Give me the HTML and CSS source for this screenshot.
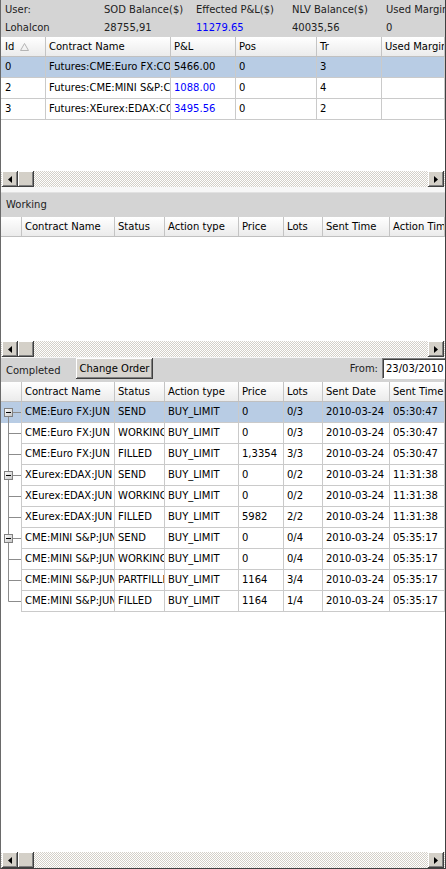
FILE: index.html
```html
<!DOCTYPE html>
<html>
<head>
<meta charset="utf-8">
<link rel="stylesheet" href="styles.css">
</head>
<body>
<div class="app">
  <div class="info">
    <span>User:</span><span>SOD Balance($)</span><span>Effected P&amp;L($)</span><span>NLV Balance($)</span><span>Used Margin</span>
    <span>Lohalcon</span><span>28755,91</span><span class="blue">11279.65</span><span>40035,56</span><span>0</span>
  </div>

  <div class="pane pane-pos">
    <div class="hdr g1">
      <div class="c">Id <svg class="sort" width="9" height="8" viewBox="0 0 9 8"><path d="M4.5 0.5 L8.5 7.5 L0.5 7.5 Z" fill="none" stroke="#b4b4b4"/></svg></div>
      <div class="c">Contract Name</div><div class="c">P&amp;L</div><div class="c">Pos</div><div class="c">Tr</div><div class="c">Used Margin</div>
    </div>
    <div class="row g1 sel">
      <div class="c">0</div><div class="c">Futures:CME:Euro FX:CONT</div><div class="c">5466.00</div><div class="c">0</div><div class="c">3</div><div class="c"></div>
    </div>
    <div class="row g1">
      <div class="c">2</div><div class="c">Futures:CME:MINI S&amp;P:CONT</div><div class="c blue">1088.00</div><div class="c">0</div><div class="c">4</div><div class="c"></div>
    </div>
    <div class="row g1">
      <div class="c">3</div><div class="c">Futures:XEurex:EDAX:CONT</div><div class="c blue">3495.56</div><div class="c">0</div><div class="c">2</div><div class="c"></div>
    </div>
    <div class="fill"></div>
    <div class="hs">
      <div class="sb"><svg width="4" height="7" viewBox="0 0 4 7"><path d="M4 0 L0 3.5 L4 7 Z" fill="#000"/></svg></div>
      <div class="sb thumb"></div>
      <div class="track"></div>
      <div class="sb"><svg width="4" height="7" viewBox="0 0 4 7"><path d="M0 0 L4 3.5 L0 7 Z" fill="#000"/></svg></div>
    </div>
  </div>

  <div class="split1"></div>
  <div class="bar">Working</div>

  <div class="pane pane-work">
    <div class="hdr g2">
      <div class="c"></div><div class="c">Contract Name</div><div class="c">Status</div><div class="c">Action type</div><div class="c">Price</div><div class="c">Lots</div><div class="c">Sent Time</div><div class="c">Action Time</div>
    </div>
    <div class="fill"></div>
    <div class="hs">
      <div class="sb"><svg width="4" height="7" viewBox="0 0 4 7"><path d="M4 0 L0 3.5 L4 7 Z" fill="#000"/></svg></div>
      <div class="sb thumb"></div>
      <div class="track"></div>
      <div class="sb"><svg width="4" height="7" viewBox="0 0 4 7"><path d="M0 0 L4 3.5 L0 7 Z" fill="#000"/></svg></div>
    </div>
  </div>

  <div class="split2"></div>
  <div class="toolbar">
    <span class="tb-label">Completed</span>
    <button class="btn">Change Order</button>
    <span class="from">From:</span>
    <div class="date">23/03/2010</div>
  </div>

  <div class="pane pane-done">
    <div class="hdr g2">
      <div class="c"></div><div class="c">Contract Name</div><div class="c">Status</div><div class="c">Action type</div><div class="c">Price</div><div class="c">Lots</div><div class="c">Sent Date</div><div class="c">Sent Time</div>
    </div>

    <div class="row g2 sel">
      <div class="c tree"><svg width="21" height="21" viewBox="0 0 21 21"><path d="M7.5 10.5 V21 M7.5 10.5 H21" stroke="#8c8c8c" fill="none"/><rect x="3.5" y="6.5" width="8" height="8" fill="url(#bx)" stroke="#808080"/><path d="M5 10.5 H10" stroke="#000"/></svg></div>
      <div class="c">CME:Euro FX:JUN</div><div class="c">SEND</div><div class="c">BUY_LIMIT</div><div class="c">0</div><div class="c">0/3</div><div class="c">2010-03-24</div><div class="c">05:30:47</div>
    </div>
    <div class="row g2">
      <div class="c tree"><svg width="21" height="21" viewBox="0 0 21 21"><path d="M7.5 0 V21 M7.5 10.5 H21" stroke="#8c8c8c" fill="none"/></svg></div>
      <div class="c">CME:Euro FX:JUN</div><div class="c">WORKING</div><div class="c">BUY_LIMIT</div><div class="c">0</div><div class="c">0/3</div><div class="c">2010-03-24</div><div class="c">05:30:47</div>
    </div>
    <div class="row g2">
      <div class="c tree"><svg width="21" height="21" viewBox="0 0 21 21"><path d="M7.5 0 V21 M7.5 10.5 H21" stroke="#8c8c8c" fill="none"/></svg></div>
      <div class="c">CME:Euro FX:JUN</div><div class="c">FILLED</div><div class="c">BUY_LIMIT</div><div class="c">1,3354</div><div class="c">3/3</div><div class="c">2010-03-24</div><div class="c">05:30:47</div>
    </div>
    <div class="row g2">
      <div class="c tree"><svg width="21" height="21" viewBox="0 0 21 21"><path d="M7.5 0 V21 M7.5 10.5 H21" stroke="#8c8c8c" fill="none"/><rect x="3.5" y="6.5" width="8" height="8" fill="url(#bx)" stroke="#808080"/><path d="M5 10.5 H10" stroke="#000"/></svg></div>
      <div class="c">XEurex:EDAX:JUN</div><div class="c">SEND</div><div class="c">BUY_LIMIT</div><div class="c">0</div><div class="c">0/2</div><div class="c">2010-03-24</div><div class="c">11:31:38</div>
    </div>
    <div class="row g2">
      <div class="c tree"><svg width="21" height="21" viewBox="0 0 21 21"><path d="M7.5 0 V21 M7.5 10.5 H21" stroke="#8c8c8c" fill="none"/></svg></div>
      <div class="c">XEurex:EDAX:JUN</div><div class="c">WORKING</div><div class="c">BUY_LIMIT</div><div class="c">0</div><div class="c">0/2</div><div class="c">2010-03-24</div><div class="c">11:31:38</div>
    </div>
    <div class="row g2">
      <div class="c tree"><svg width="21" height="21" viewBox="0 0 21 21"><path d="M7.5 0 V21 M7.5 10.5 H21" stroke="#8c8c8c" fill="none"/></svg></div>
      <div class="c">XEurex:EDAX:JUN</div><div class="c">FILLED</div><div class="c">BUY_LIMIT</div><div class="c">5982</div><div class="c">2/2</div><div class="c">2010-03-24</div><div class="c">11:31:38</div>
    </div>
    <div class="row g2">
      <div class="c tree"><svg width="21" height="21" viewBox="0 0 21 21"><path d="M7.5 0 V21 M7.5 10.5 H21" stroke="#8c8c8c" fill="none"/><rect x="3.5" y="6.5" width="8" height="8" fill="url(#bx)" stroke="#808080"/><path d="M5 10.5 H10" stroke="#000"/></svg></div>
      <div class="c">CME:MINI S&amp;P:JUN</div><div class="c">SEND</div><div class="c">BUY_LIMIT</div><div class="c">0</div><div class="c">0/4</div><div class="c">2010-03-24</div><div class="c">05:35:17</div>
    </div>
    <div class="row g2">
      <div class="c tree"><svg width="21" height="21" viewBox="0 0 21 21"><path d="M7.5 0 V21 M7.5 10.5 H21" stroke="#8c8c8c" fill="none"/></svg></div>
      <div class="c">CME:MINI S&amp;P:JUN</div><div class="c">WORKING</div><div class="c">BUY_LIMIT</div><div class="c">0</div><div class="c">0/4</div><div class="c">2010-03-24</div><div class="c">05:35:17</div>
    </div>
    <div class="row g2">
      <div class="c tree"><svg width="21" height="21" viewBox="0 0 21 21"><path d="M7.5 0 V21 M7.5 10.5 H21" stroke="#8c8c8c" fill="none"/></svg></div>
      <div class="c">CME:MINI S&amp;P:JUN</div><div class="c">PARTFILLED</div><div class="c">BUY_LIMIT</div><div class="c">1164</div><div class="c">3/4</div><div class="c">2010-03-24</div><div class="c">05:35:17</div>
    </div>
    <div class="row g2">
      <div class="c tree"><svg width="21" height="21" viewBox="0 0 21 21"><path d="M7.5 0 V10.5 H21" stroke="#8c8c8c" fill="none"/></svg></div>
      <div class="c">CME:MINI S&amp;P:JUN</div><div class="c">FILLED</div><div class="c">BUY_LIMIT</div><div class="c">1164</div><div class="c">1/4</div><div class="c">2010-03-24</div><div class="c">05:35:17</div>
    </div>

    <div class="fill"></div>
    <div class="hs">
      <div class="sb"><svg width="4" height="7" viewBox="0 0 4 7"><path d="M4 0 L0 3.5 L4 7 Z" fill="#000"/></svg></div>
      <div class="sb thumb"></div>
      <div class="track"></div>
      <div class="sb"><svg width="4" height="7" viewBox="0 0 4 7"><path d="M0 0 L4 3.5 L0 7 Z" fill="#000"/></svg></div>
    </div>
  </div>
</div>
<svg class="defs" width="0" height="0"><defs><linearGradient id="bx" x1="0" y1="0" x2="1" y2="1"><stop offset="0" stop-color="#ffffff"/><stop offset="1" stop-color="#c4c4c4"/></linearGradient></defs></svg>
</body>
</html>
```

FILE: styles.css
```css
* { box-sizing: border-box; }
html, body { margin: 0; padding: 0; background: #fff; }
body {
  font-family: "DejaVu Sans", sans-serif;
  font-size: 10px;
  color: #000;
}
.app {
  width: 446px;
  height: 869px;
  display: flex;
  flex-direction: column;
  border-left: 1px solid #6a6a6a;
  border-right: 1px solid #404040;
  border-bottom: 1px solid #404040;
  overflow: hidden;
  background: #fff;
}
.defs { position: absolute; }
.blue { color: #0000ff; }

.info {
  flex: 0 0 37px;
  background: #d4d4d4;
  display: grid;
  grid-template-columns: 99px 92px 96px 94px 1fr;
  grid-template-rows: 18px 19px;
  align-items: center;
  padding-left: 4px;
  color: #222;
  white-space: nowrap;
  overflow: hidden;
}
.info span { overflow: hidden; }

.pane { display: flex; flex-direction: column; overflow: hidden; }
.pane-pos { flex: 0 0 150px; }
.pane-work { flex: 0 0 140px; }
.pane-done { flex: 1 1 auto; }
.fill { flex: 1 1 auto; }

.hdr, .row { display: grid; flex: 0 0 auto; }
.g1 { grid-template-columns: 45px 125px 65px 81px 65px 1fr; }
.g2 { grid-template-columns: 21px 93px 50px 74px 45px 39px 67px 1fr; }

.hdr {
  height: 20px;
  background: linear-gradient(#ffffff, #ebebeb);
  border-bottom: 1px solid #c0c0c0;
}
.hdr .c {
  border-right: 1px solid #c4c4c4;
  padding-left: 3px;
  line-height: 19px;
  white-space: nowrap;
  overflow: hidden;
}
.g1.hdr .c:first-child { padding-left: 4px; }
.sort { vertical-align: -1px; margin-left: 3px; }

.row { height: 21px; }
.row .c {
  border-right: 1px solid #cacaca;
  border-bottom: 1px solid #cacaca;
  padding-left: 3px;
  line-height: 20px;
  white-space: nowrap;
  overflow: hidden;
}
.g1.row .c:first-child { padding-left: 4px; }
.row .c.tree { border-bottom: none; padding: 0; line-height: 0; }
.row.sel { background: #b8cce4; }

.hs {
  flex: 0 0 16px;
  display: flex;
  padding: 0 1px;
  background: repeating-conic-gradient(#d4d0c8 0% 25%, #ffffff 0% 50%) 0 0 / 2px 2px;
}
.sb {
  flex: 0 0 16px;
  height: 16px;
  background: #d4d0c8;
  box-shadow: inset -1px -1px #404040, inset 1px 1px #ffffff, inset -2px -2px #808080;
  display: flex;
  align-items: center;
  justify-content: center;
}
.track { flex: 1 1 auto; }

.split1 {
  flex: 0 0 6px;
  background: #f7f7f7;
  border-bottom: 1px solid #e2e2e2;
}
.bar {
  flex: 0 0 24px;
  background: #d4d4d4;
  padding-left: 5px;
  line-height: 23px;
  color: #222;
}
.split2 { flex: 0 0 1px; background: #f7f7f7; }

.toolbar {
  flex: 0 0 24px;
  background: #d4d4d4;
  display: flex;
  align-items: flex-start;
  padding-left: 5px;
  overflow: hidden;
  color: #222;
}
.tb-label { width: 70px; line-height: 23px; padding-top: 1px; }
.btn {
  font: inherit;
  color: #000;
  width: 77px;
  height: 21px;
  margin: 0;
  padding: 0;
  background: #d6d3ce;
  border: none;
  box-shadow: inset -1px -1px #404040, inset 1px 1px #ffffff, inset -2px -2px #808080;
}
.from { margin-left: auto; line-height: 21px; margin-right: 4px; }
.date {
  width: 66px;
  height: 21px;
  margin-right: -3px;
  background: #fff;
  border: 1px solid;
  border-color: #808080 #ffffff #ffffff #808080;
  box-shadow: inset 1px 1px #404040;
  padding-left: 3px;
  line-height: 19px;
  white-space: nowrap;
  overflow: hidden;
  color: #000;
  flex-shrink: 0;
}
```
